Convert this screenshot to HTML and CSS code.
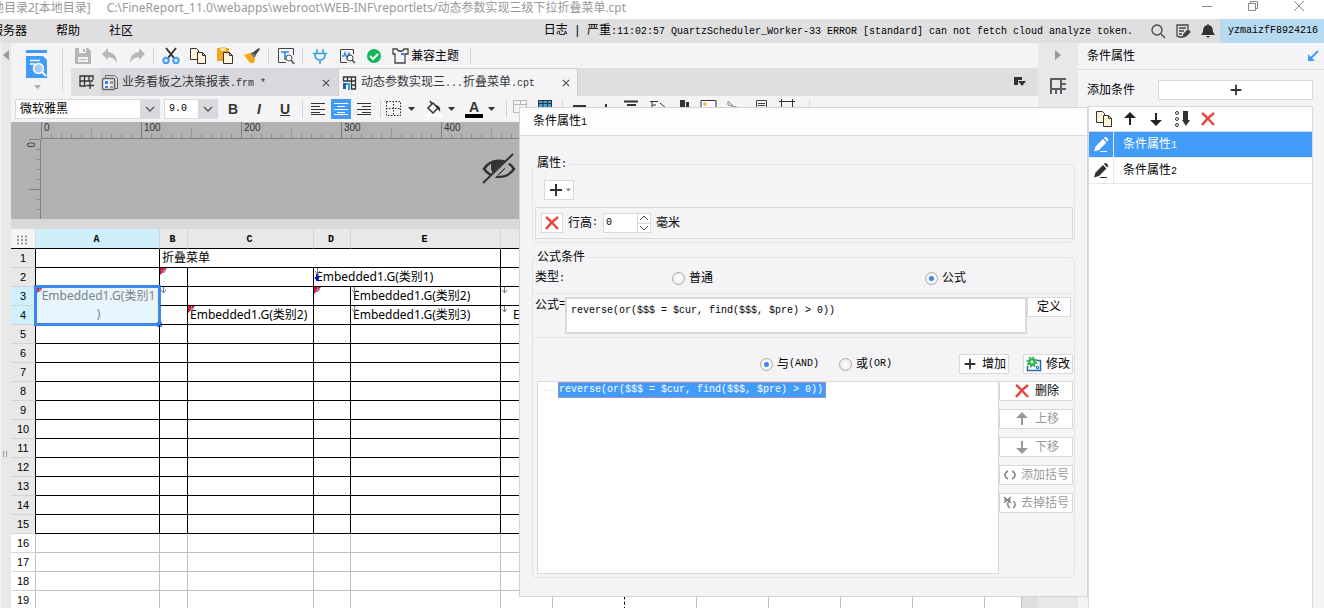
FILE: index.html
```
<!DOCTYPE html>
<html lang="zh-CN">
<head>
<meta charset="utf-8">
<title>FineReport</title>
<link rel="stylesheet" href="styles.css">
</head>
<body>
<svg class="defs" aria-hidden="true">
  <symbol id="copy" viewBox="0 0 18 18"><path d="M1.5 1.5h6l2 2v9h-8z" fill="#fff3d9" stroke="#333"/><path d="M8.5 5.5h5l3 3v8h-8z" fill="#fff3d9" stroke="#333"/><path d="M13.500 5.500v3h3" fill="none" stroke="#333"/></symbol>
  <symbol id="up" viewBox="0 0 18 18"><path d="M9 15V5M5.500 7L9 3.500 12.500 7z" fill="currentColor" stroke="currentColor" stroke-width="2"/></symbol>
  <symbol id="down" viewBox="0 0 18 18"><path d="M9 3v10M5.500 11L9 14.500 12.500 11z" fill="currentColor" stroke="currentColor" stroke-width="2"/></symbol>
  <symbol id="cross" viewBox="0 0 18 18"><path d="M3 3c4 3 8 8 12 12M15 3C11 6 6 11 3 15" fill="none" stroke="#e8453c" stroke-width="2.400"/></symbol>
  <symbol id="plus" viewBox="0 0 18 18"><path d="M9 3v12M3 9h12" stroke="#333" stroke-width="2"/></symbol>
  <symbol id="pen" viewBox="0 0 18 18"><path d="M2 15.500l1.500-5L11 3l3.500 3.500L7 14zM12 2l1-1 1.500.200L16 3l.200 1.200-1 1.200z" fill="currentColor"/><path d="M8 15.500h7" stroke="currentColor"/></symbol>
  <symbol id="caret" viewBox="0 0 8 6"><path d="M1 1h7L4.500 5z" fill="currentColor"/></symbol>
  <symbol id="chev" viewBox="0 0 10 10"><path d="M1 3l4 4 4-4" fill="none" stroke="#555" stroke-width="1.300"/></symbol>
  <symbol id="tabx" viewBox="0 0 10 10"><path d="M1 1l8 8M9 1L1 9" stroke="#444" stroke-width="1.300"/></symbol>
  <symbol id="mred" viewBox="0 0 8 8"><path d="M0 0h7L0 7z" fill="#e8063c"/><path d="M3.500 0v5M1 2l2.500 3L6 2" fill="none" stroke="#888"/></symbol>
  <symbol id="mgray" viewBox="0 0 8 8"><path d="M3.500 0v6M1 3l2.500 3L6 3" fill="none" stroke="#777"/></symbol>
</svg>

<header class="titlebar">
  <span class="cut">地目录2[本地目录]</span>
  <span>C:\FineReport_11.0\webapps\webroot\WEB-INF\reportlets/动态参数实现三级下拉折叠菜单.cpt</span>
  <div class="winbtns">
    <button aria-label="最小化"><svg width="12" height="12"><path d="M1 6.500h10" stroke="#888"/></svg></button>
    <button aria-label="还原"><svg width="12" height="12" fill="none" stroke="#888"><path d="M1.500 3.500h7v7h-7zM3.500 3.500v-2h7v7h-2"/></svg></button>
    <button aria-label="关闭"><svg width="12" height="12"><path d="M1 1l10 10M11 1L1 11" stroke="#888"/></svg></button>
  </div>
</header>

<nav class="menubar">
  <a href="#" class="cut">服务器</a><a href="#">帮助</a><a href="#">社区</a>
  <div class="log">日志<i>|</i>严重<span class="mono">:11:02:57 QuartzScheduler_Worker-33 ERROR [standard] can not fetch cloud analyze token.</span></div>
  <div class="menuicons">
    <svg width="16" height="16" fill="none" stroke="#444" stroke-width="1.300"><circle cx="7" cy="7" r="5"/><path d="M11 11l4 4"/></svg>
    <svg width="16" height="16" fill="none" stroke="#444" stroke-width="1.300"><path d="M13 6V2H2v11l2 1h4M4 5h7M4 8h5M4 11h3"/><path d="M8 14l1-3 4-4 2 2-4 4z" fill="#444"/></svg>
    <svg width="16" height="16" fill="#333"><path d="M8 1l1 1c3 1 4 3 4 7l2 3H1l2-3c0-4 1-6 4-7zM6 13h4l-2 2z"/></svg>
  </div>
  <a href="#" class="user mono">yzmaizfF8924216</a>
</nav>

<div class="main">
  <aside class="leftstrip">
    <svg width="8" height="10"><path d="M7 0v10L1 5z" fill="#999"/></svg>
    <svg class="grip" width="6" height="8"><path d="M1.500 1v6M4.500 1v6" stroke="#999"/></svg>
  </aside>

  <section class="editor">
    <div class="top">
      <button class="preview" aria-label="预览">
        <svg width="22" height="30" viewBox="0 0 22 30"><path d="M0 0h21v3H0zM0 6h17l4 4v18H0z" fill="#419bf9"/><path d="M4 10.500h10M4 14h5" stroke="#fff" stroke-width="1.500"/><circle cx="12.500" cy="18.500" r="5" fill="#a5cdf8" stroke="#fff" stroke-width="1.500"/><path d="M16 22l4 4" stroke="#fff" stroke-width="2"/></svg>
        <svg width="8" height="6" color="#aaa"><use href="#caret"/></svg>
      </button>
      <div class="topright">
        <div class="toolbar">
          <button aria-label="保存"><svg width="18" height="18"><path d="M1 1h13l3 3v13H1z" fill="#b7b7b9"/><path d="M5 1h7v5H5zM4 10h10v5H4z" fill="#f4f4f7"/><path d="M9 2h2v3H9zM5 12h8v1H5z" fill="#b7b7b9"/></svg></button>
          <button aria-label="撤销"><svg width="18" height="18"><path d="M1 7l6-6v4c5 0 9 4 9 11-2-4-5-6-9-6v3z" fill="#b7b7b9"/></svg></button>
          <button aria-label="重做"><svg width="18" height="18"><path d="M17 7l-6-6v4C6 5 2 9 2 16c2-4 5-6 9-6v3z" fill="#b7b7b9"/></svg></button>
          <i class="sep"></i>
          <button aria-label="剪切"><svg width="18" height="18" fill="none"><path d="M4 1l8 10M14 1L6 11" stroke="#333" stroke-width="2"/><circle cx="4" cy="13.500" r="2.700" stroke="#419bf9" stroke-width="2"/><circle cx="14" cy="13.500" r="2.700" stroke="#419bf9" stroke-width="2"/></svg></button>
          <button aria-label="复制"><svg width="18" height="18"><use href="#copy"/></svg></button>
          <button aria-label="粘贴"><svg width="18" height="18"><path d="M1 1h12v13H1z" fill="#f3a712"/><path d="M4 1h6v3H4z" fill="#fff" stroke="#f3a712"/><path d="M7.500 5.500h6l3 3v8h-9z" fill="#fff3d9" stroke="#333"/><path d="M13.500 5.500v3h3" fill="none" stroke="#333"/></svg></button>
          <button aria-label="格式刷"><svg width="18" height="18"><path d="M16 1l1 1-5 7-3-3z" fill="#444"/><path d="M9 5l4 4-2 2-4-4z" fill="#777"/><path d="M1 8l6-2 5 6-1 4H7z" fill="#f3a712"/></svg></button>
          <i class="sep"></i>
          <button aria-label="查找"><svg width="18" height="18" fill="none"><path d="M16.500 8V1.500h-15v14H9" stroke="#444"/><path d="M4 5h8M8 5v8" stroke="#2b86e8" stroke-width="1.600"/><circle cx="12" cy="11" r="3" stroke="#555"/><path d="M14 13l3 4" stroke="#555" stroke-width="1.500"/></svg></button>
          <i class="sep"></i>
          <button aria-label="数据连接"><svg width="18" height="18" fill="none" stroke="#2aa0dc" stroke-width="1.500"><path d="M6 2v4M12 2v4M2 6.500h14M4 7c0 4 2 6 5 6s5-2 5-6M9 13v4"/></svg></button>
          <button aria-label="性能"><svg width="18" height="18" fill="none"><path d="M15.500 7V2.500h-13v13H9" stroke="#444"/><path d="M4 9h2l1-3 2 5 2-5 1 2" stroke="#2b86e8" stroke-width="1.300"/><circle cx="12" cy="11" r="3" stroke="#444"/><path d="M14 13l3 3" stroke="#444" stroke-width="1.500"/></svg></button>
          <button aria-label="检测"><svg width="18" height="18"><circle cx="9" cy="9" r="7" fill="#12b755"/><path d="M5 9l3 3 5-5" fill="none" stroke="#fff" stroke-width="2"/></svg></button>
          <button class="theme"><svg width="18" height="18" fill="none"><path d="M6 2H2v5h2v9h10V7h3V2h-4c-1 3-6 3-7 0z" stroke="#444" stroke-width="1.300"/><path d="M10 6h3v2h-3z" fill="#2b86e8"/></svg>兼容主题</button>
          <i class="sep"></i>
        </div>
        <div class="tabs">
          <button class="newsheet" aria-label="新建"><svg width="16" height="16" fill="none" stroke="#333" stroke-width="1.300"><path d="M15 6V2H2v10h6M2 7h13M6.500 2v10M11 2v5M12 8v7M8.500 11.500H16"/></svg></button>
          <div class="tab">
            <svg width="18" height="18" fill="none" stroke="#666"><path d="M4.500 4V1.500h9l3 3v10H14"/><rect x="1.500" y="4.500" width="12" height="11" rx="1" fill="#eee" stroke-width="1.500"/><path d="M4 7h3v3H4zM4 12h3v2H4z" fill="#2b86e8" stroke="none"/><path d="M9 7h3v3H9zM9 12h3v2H9z" fill="#999" stroke="none"/></svg>
            <span>业务看板之决策报表<b class="mono">.frm *</b></span>
            <button aria-label="关闭"><svg width="8" height="8"><use href="#tabx"/></svg></button>
          </div>
          <div class="tab on">
            <svg width="16" height="16" fill="none" stroke="#333" stroke-width="1.300"><path d="M1.500 6V2h12v12H9M1 6h13M5.500 2v4M9.500 2v12M9 10h5"/><path d="M1 8h3v6H1z" fill="#1d5fa8" stroke="none"/><path d="M4 8h4v7H6v-5H4z" fill="#2aa0dc" stroke="none"/></svg>
            <span>动态参数实现三<b class="mono">...</b>折叠菜单<b class="mono">.cpt</b></span>
            <button aria-label="关闭"><svg width="8" height="8"><use href="#tabx"/></svg></button>
          </div>
          <button class="tablist" aria-label="标签列表"><svg width="14" height="12"><path d="M1 1h8v3H5v5H1zM5 5h8l-4 5z" fill="#333"/></svg></button>
        </div>
      </div>
    </div>

    <div class="format">
      <label class="combo family"><select aria-label="字体"><option>微软雅黑</option></select><svg width="10" height="10"><use href="#chev"/></svg></label>
      <label class="combo size"><select aria-label="字号" class="mono"><option>9.0</option></select><svg width="10" height="10"><use href="#chev"/></svg></label>
      <button class="ltr"><b>B</b></button><button class="ltr"><em>I</em></button><button class="ltr"><u>U</u></button>
      <i class="sep"></i>
      <button class="al" aria-label="左对齐"><svg width="16" height="14"><path d="M1 1.500h14M1 4.500h9M1 7.500h14M1 10.500h9M1 12.500h14" stroke="#333"/></svg></button>
      <button class="al on" aria-label="居中"><svg width="16" height="14"><path d="M1 1.500h14M4 4.500h8M1 7.500h14M4 10.500h8M1 12.500h14" stroke="#fff"/></svg></button>
      <button class="al" aria-label="右对齐"><svg width="16" height="14"><path d="M1 1.500h14M6 4.500h9M1 7.500h14M6 10.500h9M1 12.500h14" stroke="#333"/></svg></button>
      <i class="sep"></i>
      <button class="dd" aria-label="边框"><svg width="18" height="18"><path d="M1.500 1.500h14v14h-14zM8.500 1v15M1 8.500h15" fill="none" stroke="#222" stroke-dasharray="1.500 1.500"/></svg><svg width="8" height="6"><use href="#caret"/></svg></button>
      <button class="dd" aria-label="填充"><svg width="18" height="18"><path d="M1 14h16v3H1z" fill="#fff"/><path d="M3 8l5-5 5 5-5 5zM7 4L5 1" fill="none" stroke="#333" stroke-width="1.500"/><path d="M10 5c4 0 6 3 5 7-1-2-2-3-3-3z" fill="#333"/></svg><svg width="8" height="6"><use href="#caret"/></svg></button>
      <button class="dd" aria-label="字体颜色"><span class="fontcolor">A</span><svg width="8" height="6"><use href="#caret"/></svg></button>
      <i class="sep"></i>
      <svg class="more" width="310" height="20" fill="none"><path d="M2.500 3.500h13v12h-13zM2 7.500h14M9.500 4v3" stroke="#b5b5b5"/><path d="M27 3h14v14H27z" fill="#39a9e0"/><path d="M27.500 3.500h13v13h-13zM27 6.500h14M32 3v13M36.500 3v13" stroke="#333"/><path d="M51.500 3v17M298.500 3v17" stroke="#d4d4d7"/><path d="M62 9h13M113 4.500h14M116 8h9" stroke="#333" stroke-width="2"/><path d="M95 7v4" stroke="#333" stroke-width="2"/><path d="M139 4.500h8M141 4v8M141 8h4M149 6l7 6" stroke="#333"/><path d="M169 3h5v8h-5zM175 5h3v6h-3z" fill="#333"/><path d="M190 3.500h15V16h-15z" fill="#fff" stroke="#333"/><circle cx="194" cy="7" r="2" fill="#f3c14a"/><path d="M217 4l9 9M217 4v4l12 3" stroke="#888"/><path d="M245.500 3.500h10V16h-10zM247 6.500h7M247 8.500h7" stroke="#444"/><path d="M268 4.500h16M270.500 2v15M281.500 2v15" stroke="#333"/></svg>
    </div>

    <div class="param">
      <div class="hruler"><span>0</span><span>100</span><span>200</span><span>300</span><span>400</span></div>
      <div class="vruler"><span>0</span></div>
      <svg class="eye" width="34" height="32" viewBox="0 0 34 32"><path d="M2 16C8 6 24 4 32 16 25 26 10 27 2 16z" fill="none" stroke="#333" stroke-width="2.500"/><path d="M9 9h14v7l-6 6c-5 0-8-3-8-7z" fill="#333"/><path d="M3 31L33 1" stroke="#b2b2b2" stroke-width="5"/><path d="M1 30L31 1" stroke="#333" stroke-width="2"/></svg>
    </div>

    <div class="sheet">
      <div class="gridwrap">
      <table class="grid">
        <colgroup><col class="c0"><col class="cA"><col class="cB"><col class="cC"><col class="cD"><col class="cE"><col class="cF"><col class="cG"><col class="cG"><col class="cG"><col class="cG"><col class="cG"><col class="cG"><col></colgroup>
        <thead><tr><th class="corner"><svg width="12" height="10"><path d="M1 1.500h10M1 5h10M1 8.500h10" stroke="#999" stroke-width="2" stroke-dasharray="2 2"/></svg></th><th class="hot">A</th><th>B</th><th>C</th><th>D</th><th>E</th><th></th><th></th><th></th><th></th><th></th><th></th><th></th><th></th></tr></thead>
        <tbody>
          <tr><th>1</th><td></td><td colspan="4">折叠菜单</td><td></td><td></td><td></td><td></td><td></td><td></td><td></td><td></td></tr>
          <tr><th>2</th><td></td><td><svg class="mark"><use href="#mred"/></svg></td><td></td><td colspan="2"><svg class="mark tall"><use href="#mgray" width="8" height="8"/><path d="M2.500 6v6M1 9.500h4L3 13z" fill="#00f" stroke="#00f"/></svg>Embedded1.G(类别1)</td><td></td><td></td><td></td><td></td><td></td><td></td><td></td><td></td></tr>
          <tr><th class="hot">3</th><td rowspan="2" class="sel"><svg class="mark"><use href="#mred"/></svg>Embedded1.G(类别1<br>)<i class="frame"></i></td><td><svg class="mark"><use href="#mgray"/></svg></td><td></td><td><svg class="mark"><use href="#mred"/></svg></td><td><svg class="mark"><use href="#mgray"/></svg>Embedded1.G(类别2)</td><td><svg class="mark"><use href="#mgray"/></svg></td><td></td><td></td><td></td><td></td><td></td><td></td><td></td></tr>
          <tr><th class="hot">4</th><td></td><td><svg class="mark"><use href="#mred"/></svg>Embedded1.G(类别2)</td><td></td><td><svg class="mark"><use href="#mgray"/></svg>Embedded1.G(类别3)</td><td class="inset"><svg class="mark"><use href="#mgray"/></svg>E</td><td></td><td></td><td></td><td></td><td></td><td></td><td></td></tr>
          <tr><th>5</th><td></td><td></td><td></td><td></td><td></td><td></td><td></td><td></td><td></td><td></td><td></td><td></td><td></td></tr>
          <tr><th>6</th><td></td><td></td><td></td><td></td><td></td><td></td><td></td><td></td><td></td><td></td><td></td><td></td><td></td></tr>
          <tr><th>7</th><td></td><td></td><td></td><td></td><td></td><td></td><td></td><td></td><td></td><td></td><td></td><td></td><td></td></tr>
          <tr><th>8</th><td></td><td></td><td></td><td></td><td></td><td></td><td></td><td></td><td></td><td></td><td></td><td></td><td></td></tr>
          <tr><th>9</th><td></td><td></td><td></td><td></td><td></td><td></td><td></td><td></td><td></td><td></td><td></td><td></td><td></td></tr>
          <tr><th>10</th><td></td><td></td><td></td><td></td><td></td><td></td><td></td><td></td><td></td><td></td><td></td><td></td><td></td></tr>
          <tr><th>11</th><td></td><td></td><td></td><td></td><td></td><td></td><td></td><td></td><td></td><td></td><td></td><td></td><td></td></tr>
          <tr><th>12</th><td></td><td></td><td></td><td></td><td></td><td></td><td></td><td></td><td></td><td></td><td></td><td></td><td></td></tr>
          <tr><th>13</th><td></td><td></td><td></td><td></td><td></td><td></td><td></td><td></td><td></td><td></td><td></td><td></td><td></td></tr>
          <tr><th>14</th><td></td><td></td><td></td><td></td><td></td><td></td><td></td><td></td><td></td><td></td><td></td><td></td><td></td></tr>
          <tr><th>15</th><td></td><td></td><td></td><td></td><td></td><td></td><td></td><td></td><td></td><td></td><td></td><td></td><td></td></tr>
        </tbody>
        <tbody class="spare">
          <tr><th>16</th><td></td><td></td><td></td><td></td><td></td><td></td><td></td><td></td><td></td><td></td><td></td><td></td><td></td></tr>
          <tr><th>17</th><td></td><td></td><td></td><td></td><td></td><td></td><td></td><td></td><td></td><td></td><td></td><td></td><td></td></tr>
          <tr><th>18</th><td></td><td></td><td></td><td></td><td></td><td></td><td></td><td></td><td></td><td></td><td></td><td></td><td></td></tr>
          <tr><th>19</th><td></td><td></td><td></td><td></td><td></td><td></td><td class="page"></td><td></td><td></td><td></td><td></td><td></td><td></td></tr>
        </tbody>
      </table>
      </div>
      <div class="vscroll"></div>
    </div>
  </section>

  <aside class="sidestrip">
    <svg width="8" height="10"><path d="M1 0v10l6-5z" fill="#999"/></svg>
    <svg width="18" height="18" fill="none" stroke="#5a5a66" stroke-width="2"><path d="M2 17V2h15M2 12h15M12 2v10M12 7h5M7 12v5M12 12v5"/></svg>
  </aside>

  <aside class="panel">
    <div class="panelhead"><h2>条件属性</h2><svg width="12" height="12"><path d="M11 1L4 8" stroke="#419bf9" stroke-width="2"/><path d="M1 4v7h7z" fill="#419bf9"/></svg></div>
    <div class="addrow"><span>添加条件</span><button aria-label="添加条件"><svg width="16" height="16"><use href="#plus"/></svg></button></div>
    <div class="condlist">
      <div class="condtools">
        <button aria-label="复制"><svg width="18" height="18"><use href="#copy"/></svg></button>
        <button aria-label="上移"><svg width="18" height="18"><use href="#up"/></svg></button>
        <button aria-label="下移"><svg width="18" height="18"><use href="#down"/></svg></button>
        <button aria-label="排序"><svg width="18" height="18"><path d="M10 1h5v9h2l-4 6-4-6h1z" fill="#333"/><g fill="none" stroke="#333"><circle cx="4" cy="3" r="1.500"/><circle cx="4" cy="9" r="1.500"/><circle cx="4" cy="15" r="1.500"/></g></svg></button>
        <button aria-label="删除"><svg width="18" height="18"><use href="#cross"/></svg></button>
      </div>
      <div class="cond on"><span class="pen"><svg width="18" height="18"><use href="#pen"/></svg></span><span>条件属性<b class="mono">1</b></span></div>
      <div class="cond"><span class="pen"><svg width="18" height="18"><use href="#pen"/></svg></span><span>条件属性<b class="mono">2</b></span></div>
    </div>
  </aside>

  <section class="dialog" role="dialog" aria-label="条件属性1">
    <h3>条件属性<b class="mono">1</b></h3>
    <div class="dbody">
      <fieldset class="props">
        <legend>属性<b class="mono">:</b></legend>
        <button class="btn addprop" aria-label="添加属性"><svg width="18" height="18"><use href="#plus"/></svg><svg width="6" height="6"><use href="#caret"/></svg></button>
        <div class="proprow">
          <button class="btn del" aria-label="删除属性"><svg width="18" height="18"><use href="#cross"/></svg></button>
          <label for="rowh">行高<b class="mono">:</b></label>
          <div class="spin"><input id="rowh" class="mono" value="0"><div><button aria-label="增加"><svg width="10" height="8" fill="none" stroke="#444"><path d="M1 6l4-4 4 4"/></svg></button><button aria-label="减少"><svg width="10" height="8" fill="none" stroke="#444"><path d="M1 2l4 4 4-4"/></svg></button></div></div>
          <span>毫米</span>
        </div>
      </fieldset>
      <fieldset class="formula">
        <legend>公式条件</legend>
        <div class="typerow"><span>类型<b class="mono">:</b></span><label><input type="radio" name="type">普通</label><label><input type="radio" name="type" checked>公式</label></div>
        <div class="exprrow"><label for="expr">公式<b class="mono">=</b></label><textarea id="expr" class="mono">reverse(or($$$ = $cur, find($$$, $pre) &gt; 0))</textarea><button class="btn def">定义</button></div>
        <div class="joinrow">
          <label><input type="radio" name="join" checked>与<b class="mono">(AND)</b></label>
          <label><input type="radio" name="join">或<b class="mono">(OR)</b></label>
          <button class="btn add"><svg width="16" height="16"><use href="#plus"/></svg>增加</button>
          <button class="btn"><svg width="16" height="16" fill="none"><path d="M1.500 10v4.500h13V4.500H11" stroke="#2268b5" stroke-width="1.500"/><path d="M10.500 10.500h2v2h-2z" stroke="#2268b5"/><circle cx="6" cy="6" r="2.700" stroke="#2eb350" stroke-width="2.500"/><circle cx="6" cy="6" r="4.600" stroke="#2eb350" stroke-width="2" stroke-dasharray="1.800 1.800"/></svg>修改</button>
        </div>
        <div class="listrow">
          <div class="tree"><div class="node mono">reverse(or($$$ = $cur, find($$$, $pre) &gt; 0))</div></div>
          <div class="ops">
            <button class="btn"><svg width="18" height="18"><use href="#cross"/></svg>删除</button>
            <button class="btn" disabled><svg width="18" height="18"><use href="#up"/></svg>上移</button>
            <button class="btn" disabled><svg width="18" height="18"><use href="#down"/></svg>下移</button>
            <button class="btn" disabled><svg width="14" height="14" fill="none" stroke="#888" stroke-width="1.600"><path d="M5 3C1 5 1 9 5 11M9 3c4 2 4 6 0 8"/></svg>添加括号</button>
            <button class="btn" disabled><svg width="14" height="14" fill="none" stroke="#888" stroke-width="1.500"><path d="M6 5c-2 2-2 5 1 7M10 5c3 2 3 5 0 7M1 1l7 6M8 1L1 7M1 4h7"/></svg>去掉括号</button>
          </div>
        </div>
      </fieldset>
    </div>
  </section>
</div>
</body>
</html>
```
FILE: styles.css
```
* { box-sizing: border-box; }
html, body { height: 100%; }
body {
  margin: 0;
  display: flex;
  flex-direction: column;
  overflow: hidden;
  background: #f4f4f7;
  color: #000;
  font: 12px/16px "Liberation Sans", "Noto Sans CJK SC", sans-serif;
}
button, input, select, textarea { font: inherit; color: inherit; margin: 0; }
button { border: 0; padding: 0; background: none; display: flex; align-items: center; justify-content: center; }
a { color: inherit; text-decoration: none; }
h2, h3 { margin: 0; font-size: 12px; font-weight: 400; }
i { font-style: normal; }
svg { flex: none; display: block; }
.defs { position: absolute; width: 0; height: 0; }
.mono { font-family: "Liberation Mono", "Noto Sans CJK SC", monospace; font-size: 10px; font-weight: 400; }

.titlebar {
  height: 19px;
  display: flex;
  align-items: center;
  gap: 16px;
  background: #fff;
  color: #999;
  font-family: "Noto Sans", "Noto Sans CJK SC", sans-serif;
  line-height: 16px;
  padding-bottom: 3px;
  white-space: nowrap;
}
.titlebar .cut { margin-left: -8px; }
.winbtns { margin-left: auto; display: flex; gap: 34px; padding: 0 19px 4px 0; }

.menubar { height: 24px; display: flex; align-items: center; gap: 29px; background: #dfdfe1; white-space: nowrap; }
.menubar .cut { margin-left: -9px; }
.log { margin-left: auto; }
.log i { margin: 0 8px; }
.menuicons { display: flex; gap: 9px; margin-left: -12px; }
.user { align-self: stretch; width: 104px; margin-left: -25px; background: #b7daf1; line-height: 24px; padding-left: 8px; }

.main { flex: 1; min-height: 0; display: flex; position: relative; }
.leftstrip { width: 11px; flex: none; background: #e8e8e8; border-left: 1px solid #f4f4f7; padding: 7px 0 0 1px; display: flex; flex-direction: column; }
.leftstrip .grip { margin-top: 390px; }

.editor { flex: 1; min-width: 0; display: flex; flex-direction: column; overflow: hidden; }
.top { height: 53px; display: flex; flex: none; }
.preview { width: 52px; margin: 6px 6px 5px 0; border-right: 1px solid #d4d4d7; flex-direction: column; gap: 4px; }
.topright { flex: 1; min-width: 0; }
.toolbar { height: 25px; display: flex; align-items: center; }
.toolbar button { width: 27px; height: 24px; }
.toolbar .theme { width: auto; padding-left: 4px; gap: 2px; margin-right: 8px; }
.sep { width: 1px; height: 16px; margin: 0 3px; background: #d4d4d7; flex: none; }
.tabs { height: 28px; margin-left: 2px; display: flex; background: #dfdfe2; color: #333; }
.newsheet { width: 30px; }
.tab { width: 237px; display: flex; align-items: center; gap: 3px; padding: 2px 8px 0 0; background: #d9d9dd; }
.tab span { flex: 1; white-space: nowrap; }
.tab.on { width: 240px; padding: 0 7px 0 3px; background: #f4f4f7; border: 1px solid #d0d0d4; border-bottom: 0; }
.tablist { margin: 0 11px 0 auto; }

.format { height: 26px; flex: none; display: flex; align-items: center; padding-left: 4px; }
.combo { position: relative; height: 20px; margin-right: 4px; }
.combo select { width: 100%; height: 20px; appearance: none; border: 1px solid #d9d9dd; border-right: 20px solid #d9d9dd; border-radius: 0; background: #fff; padding: 0 4px; outline: 0; }
.combo svg { position: absolute; right: 5px; top: 5px; pointer-events: none; }
.family { width: 145px; }
.format .size { width: 54px; margin-right: 2px; }
.ltr { width: 26px; height: 20px; font-family: "Liberation Sans", sans-serif; font-size: 14px; font-weight: 700; color: #333; }
.format .sep { margin: 0 4px; height: 18px; }
.al { width: 20px; height: 20px; margin: 0 2px 0 1px; }
.al.on { background: #419bf9; }
.dd { gap: 4px; width: 40px; height: 20px; color: #333; justify-content: flex-start; }
.format .dd + .sep { margin-left: 1px; }
.fontcolor { width: 18px; border-bottom: 4px solid #000; font: bold 14px/14px "Liberation Sans", sans-serif; }
.more { align-self: flex-start; margin-top: 1px; }

.param {
  height: 97px;
  flex: none;
  display: grid;
  grid-template: 17px 1fr / 30px 1fr;
  background: #b2b2b2;
  position: relative;
  font: 10px/12px "Liberation Sans", sans-serif;
  color: #333;
}
.hruler {
  grid-column: 2;
  display: flex;
  border-bottom: 1px solid #808080;
  background:
    linear-gradient(90deg, #808080 1px, transparent 1px) 0 0 / 100px 100% repeat-x,
    linear-gradient(90deg, #999 1px, transparent 1px) 0 100% / 50px 10px repeat-x,
    linear-gradient(90deg, #909090 1px, transparent 1px) 0 100% / 10px 4px repeat-x;
}
.hruler span { width: 100px; padding-left: 3px; }
.vruler {
  grid-column: 1;
  margin-left: 13px;
  border-right: 1px solid #808080;
  background:
    linear-gradient(#808080 1px, transparent 1px) 100% 0 / 11px 50px repeat-y,
    linear-gradient(#909090 1px, transparent 1px) 100% 0 / 4px 10px repeat-y;
}
.vruler span { writing-mode: vertical-rl; }
.eye { position: absolute; left: 471px; top: 31px; }

.sheet { flex: 1; min-height: 0; display: flex; border-top: 10px solid #d9d9dc; }
.gridwrap { flex: 1; min-width: 0; overflow: hidden; background: #fff; }
.vscroll { width: 16px; background: #dfdfe1; }
.grid { width: 100%; table-layout: fixed; border-spacing: 0; }
.c0 { width: 25px; } .cA { width: 124px; } .cB { width: 28px; } .cC { width: 126px; }
.cD { width: 37px; } .cE { width: 150px; } .cF { width: 52px; } .cG { width: 72px; }
.grid th, .grid td { height: 19px; padding: 0; border: solid #000; border-width: 0 1px 1px 0; }
.grid th { background: #e8e8e8; font: 11px/16px "Liberation Sans", sans-serif; border-bottom-color: #d4d4d7; }
.grid thead th { height: 20px; padding: 2px 2px 0 0; border-color: #d4d4d7; border-bottom-color: #000; font: bold 10px/16px "Liberation Mono", monospace; }
.grid th.hot { background: #cff0fb; }
.grid .corner { background: #f4f4f7; }
.corner svg { margin: auto; }
.grid td { position: relative; padding-left: 2px; font: 12px/18px "Noto Sans", "Noto Sans CJK SC", sans-serif; white-space: nowrap; overflow: hidden; }
.grid td.inset { padding-left: 12px; }
.grid .spare td { border-color: #c0c0c0; }
.grid .spare th { background: #fff; border-right-color: #c0c0c0; }
.grid .spare .page { border-right: 1px dashed #000; }
.mark { position: absolute; left: 0; top: 0; width: 8px; height: 8px; }
.mark.tall { height: 16px; }
.grid td.sel { background: #e9f5fe; color: #7d8287; text-align: center; vertical-align: top; overflow: visible; }
.frame { position: absolute; inset: -2px; border: 3px solid #3a86ec; }
.frame::after { content: ""; position: absolute; right: -4px; bottom: -4px; width: 5px; height: 5px; background: #3a86ec; }

.sidestrip { width: 40px; flex: none; background: #e8e8e8; display: flex; flex-direction: column; align-items: center; padding-top: 7px; gap: 17px; }

.panel { width: 246px; flex: none; display: flex; flex-direction: column; }
.panelhead { height: 27px; display: flex; align-items: center; justify-content: space-between; padding: 0 5px 0 9px; border-bottom: 1px solid #d9d9dd; }
.addrow { height: 36px; display: flex; align-items: center; justify-content: space-between; padding: 5px 11px 1px 9px; }
.addrow button { width: 155px; height: 20px; background: #fff; border: 1px solid #d9d9dd; }
.condlist { flex: 1; margin: 0 11px 0 10px; background: #fff; border: 1px solid #d9d9dd; border-bottom: 0; }
.condtools { height: 25px; display: flex; align-items: center; gap: 8px; padding-left: 6px; border-bottom: 1px solid #d9d9dd; color: #222; }
.cond { height: 26px; display: flex; align-items: center; gap: 9px; border-bottom: 1px solid #e8e8ea; }
.cond .pen { align-self: stretch; width: 25px; display: flex; align-items: center; justify-content: center; border-right: 1px solid #e8e8ea; color: #333; }
.cond.on { background: #419bf9; color: #fff; }
.cond.on .pen { color: #fff; }

.dialog { position: absolute; left: 519px; right: 236px; top: 64px; background: #f4f4f7; border: 1px solid #d4d4d7; }
.dialog h3 { height: 28px; padding: 5px 13px; background: #fdfdfd; border-bottom: 1px solid #d9d9dd; }
.dbody { padding: 19px 12px 18px; display: flex; flex-direction: column; gap: 6px; }
fieldset { margin: 0; min-width: 0; border: 1px solid #e4e4e8; border-radius: 5px; padding: 0 1px 3px 2px; }
legend { margin-left: 0; padding: 0 3px 0 2px; }
.btn { height: 20px; background: #fff; border: 1px solid #d9d9dd; }
.props { height: 88px; }
.addprop { width: 30px; margin: 7px 0 7px 9px; color: #888; }
.proprow { height: 32px; display: flex; align-items: center; border: 1px solid #d9d9dd; padding-left: 5px; gap: 5px; }
.del { width: 22px; }
.spin { display: flex; width: 48px; height: 20px; border: 1px solid #d9d9dd; background: #fff; }
.spin input { flex: 1; min-width: 0; border: 0; padding: 0 2px; outline: 0; background: none; }
.spin > div { display: flex; flex-direction: column; border-left: 1px solid #d9d9dd; }
.spin button { width: 12px; flex: 1; min-height: 0; }
.spin button + button { border-top: 1px solid #d9d9dd; }
input[type="radio"] { appearance: none; width: 13px; height: 13px; margin: 0 4px 0 0; border: 1px solid #aaa; border-radius: 50%; background: radial-gradient(#fff, #e6e6e6); }
input[type="radio"]:checked { background: radial-gradient(circle, #3a86ec 0 2px, #f4f4f4 3px); }
fieldset label { display: flex; align-items: center; }
.typerow { height: 29px; padding-bottom: 2px; display: grid; grid-template-columns: 137px 253px 1fr; align-items: center; border-bottom: 1px solid #e4e4e8; }
.exprrow { height: 44px; display: flex; align-items: flex-start; padding: 3px 2px 0 0; border-bottom: 1px solid #e4e4e8; }
.exprrow textarea { flex: 1; height: 37px; border: 2px solid #d9d9dd; background: #fff; resize: none; padding: 4px; outline: 0; line-height: 16px; }
.def { width: 44px; }
.joinrow { height: 43px; display: flex; align-items: center; padding-left: 225px; padding-top: 9px; gap: 20px; }
.joinrow .btn { width: 50px; gap: 4px; margin-left: -6px; }
.joinrow .add { margin-left: auto; }
.listrow { display: flex; padding-left: 2px; }
.tree { flex: 1; height: 193px; border: 1px solid #d9d9dd; background: #fff; padding-left: 20px; }
.node { display: inline-block; background: #419bf9; color: #fff; border: 1px solid #9a8fc4; padding-right: 2px; line-height: 14px; position: relative; vertical-align: top; }
.node::before { content: ""; position: absolute; left: -14px; top: 7px; width: 10px; height: 1px; background: #e8e8ea; }
.ops { width: 74px; display: flex; flex-direction: column; gap: 8px; }
.ops .btn { gap: 4px; }
.ops .btn:disabled { color: #999; }
```
